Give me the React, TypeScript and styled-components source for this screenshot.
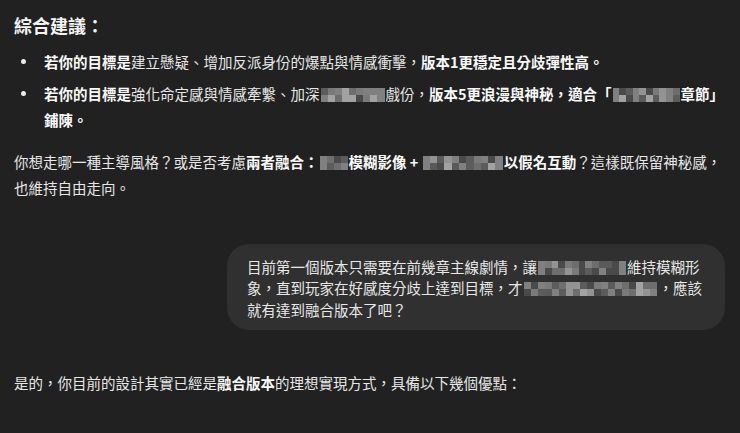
import React from 'react';
import styled, { createGlobalStyle } from 'styled-components';

const GlobalStyle = createGlobalStyle`
    html, body {
        margin: 0;
        padding: 0;
        background: #212121;
    }
    body {
        font-family: "Noto Sans CJK TC", "Noto Sans", sans-serif;
        color: #e8e8e8;
        -webkit-font-smoothing: antialiased;
    }
`

const Page = styled.div`
    padding: 13px 14px 20px 14px;
    font-size: 14.5px;
    line-height: 26px;
`

const Heading = styled.h3`
    margin: 0;
    font-size: 18px;
    line-height: 25px;
    font-weight: 700;
    color: #f4f4f4;
`

const List = styled.ul`
    margin: 10.5px 0 0 0;
    padding: 0;
    list-style: none;
`

const Item = styled.li`
    display: grid;
    grid-template-columns: 30px 1fr;
    & + & {
        margin-top: 6px;
    }
    &::before {
        content: "";
        width: 5px;
        height: 5px;
        border-radius: 50%;
        background: #ececec;
        margin: 10.5px 0 0 6.5px;
    }
`

const Para = styled.p<{ $gap: number }>`
    margin: ${p => p.$gap}px 0 0 0;
`

const Strong = styled.strong`
    font-weight: 700;
    color: #fafafa;
`

const BubbleRow = styled.div`
    display: flex;
    justify-content: flex-end;
    margin-top: 43px;
    padding-right: 1px;
`

const Bubble = styled.div`
    box-sizing: border-box;
    max-width: 498px;
    background: #303030;
    border-radius: 22px;
    padding: 12px 16px 9px 20px;
    line-height: 21.7px;
`

// outer box keeps the mosaic from stretching the line box
const MosaicBox = styled.span`
    display: inline-block;
    overflow: hidden;
    height: 14px;
    line-height: 0;
    vertical-align: -2px;
    margin: 0 1px;
`

const MosaicGrid = styled.span<{ $cols: number }>`
    display: grid;
    grid-template-columns: repeat(${p => p.$cols}, 1fr);
    grid-template-rows: 7px 7px;
    width: 100%;
    height: 14px;
`

const Cell = styled.span`
    display: block;
`

const shades = ['#4a4a4a', '#5c5c5c', '#6e6e6e', '#808080', '#939393', '#a2a2a2', '#5a5a5a', '#7a7a7a'];

const Mosaic = ({ width, seed }: { width: number, seed: number }) => {
    const cols = Math.max(2, Math.round(width / 7));
    let s = seed * 9301 + 49297;
    const cells = [];
    for (let i = 0; i < cols * 2; i++) {
        s = (s * 9301 + 49297) % 233280;
        const col = i % cols;
        let idx = Math.floor((s / 233280) * shades.length);
        // edges fade into the background a little
        if (col === 0 || col === cols - 1) idx = Math.min(idx, 3);
        cells.push(<Cell key={i} style={{ background: shades[idx] }} />);
    }
    return (
        <MosaicBox style={{ width: width }}>
            <MosaicGrid $cols={cols}>{cells}</MosaicGrid>
        </MosaicBox>
    );
}

export default function App() {
    return (
        <>
            <GlobalStyle />
            <Page>
                <Heading>綜合建議：</Heading>
                <List>
                    <Item>
                        <span>
                            <Strong>若你的目標是</Strong>建立懸疑、增加反派身份的爆點與情感衝擊，<Strong>版本1更穩定且分歧彈性高。</Strong>
                        </span>
                    </Item>
                    <Item>
                        <span>
                            <Strong>若你的目標是</Strong>強化命定感與情感牽繫、加深<Mosaic width={64} seed={3} />戲份，<Strong>版本5更浪漫與神秘，適合「<Mosaic width={67} seed={7} />章節」鋪陳。</Strong>
                        </span>
                    </Item>
                </List>
                <Para $gap={16}>
                    你想走哪一種主導風格？或是否考慮<Strong>兩者融合：<Mosaic width={28} seed={11} />模糊影像 + <Mosaic width={80} seed={5} />以假名互動</Strong>？這樣既保留神秘感，也維持自由走向。
                </Para>
                <BubbleRow>
                    <Bubble>
                        目前第一個版本只需要在前幾章主線劇情，讓<Mosaic width={88} seed={13} />維持模糊形象，直到玩家在好感度分歧上達到目標，才<Mosaic width={134} seed={17} />，應該就有達到融合版本了吧？
                    </Bubble>
                </BubbleRow>
                <Para $gap={40}>
                    是的，你目前的設計其實已經是<Strong>融合版本</Strong>的理想實現方式，具備以下幾個優點：
                </Para>
            </Page>
        </>
    );
}
